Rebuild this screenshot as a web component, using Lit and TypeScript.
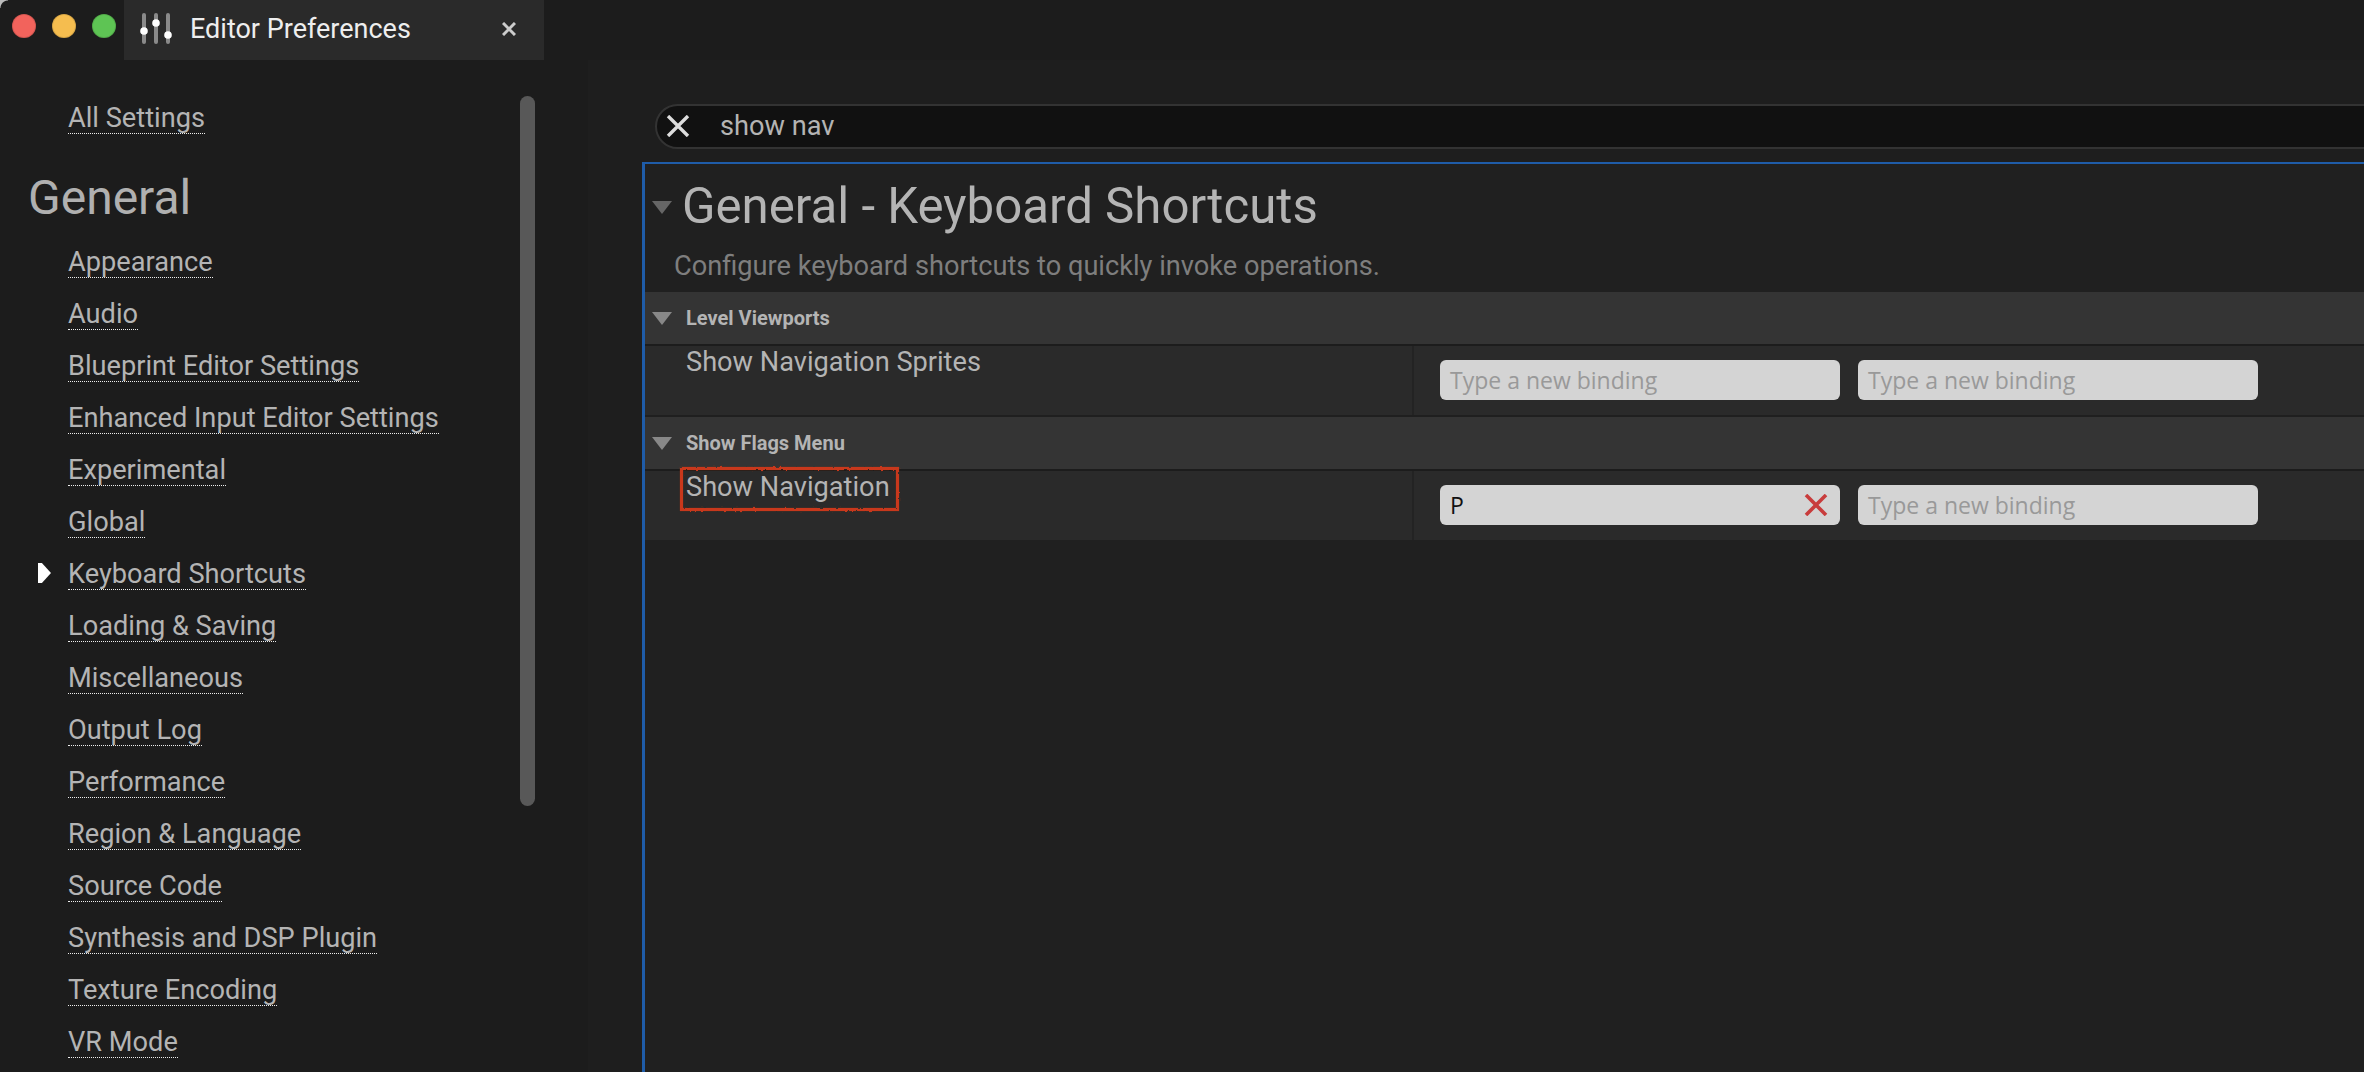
import { LitElement, html, css, svg } from 'lit';
import { customElement } from 'lit/decorators.js';

const LINKS = [
  'Appearance',
  'Audio',
  'Blueprint Editor Settings',
  'Enhanced Input Editor Settings',
  'Experimental',
  'Global',
  'Keyboard Shortcuts',
  'Loading & Saving',
  'Miscellaneous',
  'Output Log',
  'Performance',
  'Region & Language',
  'Source Code',
  'Synthesis and DSP Plugin',
  'Texture Encoding',
  'VR Mode',
];

const SLIDERS = svg`
  <rect x="2" y="0" width="4" height="31" rx="2" fill="#8a8a8a" />
  <rect x="14" y="0" width="4" height="31" rx="2" fill="#8a8a8a" />
  <rect x="26" y="0" width="4" height="31" rx="2" fill="#8a8a8a" />
  <circle cx="4" cy="18" r="3.8" fill="#fff" />
  <circle cx="16" cy="10" r="3.8" fill="#fff" />
  <circle cx="28" cy="22" r="3.8" fill="#fff" />
`;

@customElement('app-root')
export class AppRoot extends LitElement {
  static styles = css`
    :host {
      display: flex;
      flex-direction: column;
      width: 2364px;
      height: 1072px;
      overflow: hidden;
      background: #1c1c1c;
      font-family: Roboto, sans-serif;
      font-size: 27.2px;
      color: #b4b4b4;
    }

    .titlebar {
      display: flex;
      height: 60px;
      flex: none;
    }

    .lights {
      position: relative;
      display: flex;
      gap: 16px;
      width: 124px;
      padding: 14px 0 0 12px;
      box-sizing: border-box;
    }

    .corner {
      position: absolute;
      left: 0;
      top: 0;
      width: 8px;
      height: 8px;
      background: radial-gradient(circle at 8px 8px, transparent 7px, #bbb 8px);
    }

    .light {
      width: 24px;
      height: 24px;
      border-radius: 50%;
      box-shadow: inset 0 0 0 1px rgba(0, 0, 0, 0.12);
    }

    .tab {
      display: flex;
      align-items: center;
      width: 420px;
      padding: 0 28px 2px 16px;
      box-sizing: border-box;
      background: #2a2a2a;
      color: #eee;
      font-size: 27px;
    }

    .tab svg {
      flex: none;
    }

    .tab .sliders {
      margin-right: 18px;
    }

    .tab span {
      flex: 1;
    }

    .body {
      display: flex;
      flex: 1;
      min-height: 0;
    }

    .sidebar {
      position: relative;
      flex: none;
      width: 588px;
      padding: 41px 0 0 68px;
      box-sizing: border-box;
    }

    .scrollbar {
      position: absolute;
      left: 520px;
      top: 36px;
      width: 15px;
      height: 710px;
      border-radius: 8px;
      background: #585858;
    }

    .link {
      position: relative;
      width: fit-content;
      height: 32px;
      line-height: 34px;
      margin-bottom: 19px;
      border-bottom: 1px dotted #eee;
    }

    .link.active::before {
      content: '';
      position: absolute;
      left: -30px;
      top: 6px;
      width: 13px;
      height: 20px;
      background: #fff;
      clip-path: polygon(0 0, 30% 0, 100% 50%, 30% 100%, 0 100%);
    }

    h2 {
      margin: 36px 0 19px -40px;
      font-size: 48px;
      font-weight: 400;
      line-height: 56px;
      color: #b0b0b0;
    }

    .gutter {
      flex: none;
      width: 54px;
      background: #1e1e1e;
    }

    .main {
      flex: 1;
      min-width: 0;
      display: flex;
      flex-direction: column;
      padding-top: 44px;
      background: #1e1e1e;
    }

    .search {
      display: flex;
      align-items: center;
      height: 45px;
      margin: 0 -40px 13px 13px;
      padding: 0 0 2px 9px;
      box-sizing: border-box;
      background: #111;
      border: 2px solid #333;
      border-radius: 23px;
    }

    .search svg {
      flex: none;
      margin-right: 30px;
    }

    .panel {
      flex: 1;
      border-top: 2px solid #1f5ca8;
      border-left: 3px solid #1f5ca8;
      background: #202020;
    }

    .panel-title {
      display: flex;
      align-items: center;
      height: 62px;
      padding: 11px 0 0 7px;
    }

    .panel-title h1 {
      margin: 0 0 0 10px;
      font-size: 49.2px;
      font-weight: 400;
      line-height: 56px;
      color: #b4b4b4;
    }

    .tri {
      flex: none;
      width: 0;
      height: 0;
      border-left: 10px solid transparent;
      border-right: 10px solid transparent;
      border-top: 13px solid #888;
    }

    .panel-title .tri {
      border-top-color: #666;
      margin-top: 2px;
    }

    .desc {
      height: 55px;
      padding: 13px 0 0 29px;
      box-sizing: border-box;
      line-height: 32px;
      color: #7e7e7e;
    }

    .category {
      display: flex;
      align-items: center;
      gap: 14px;
      height: 52px;
      padding-left: 7px;
      background: #343434;
      border-bottom: 2px solid #1c1c1c;
      font-size: 20px;
      font-weight: 700;
      color: #b4b4b4;
    }

    .row {
      display: grid;
      grid-template-columns: 767px 1fr;
      height: 69px;
      background: #2a2a2a;
      border-bottom: 2px solid #1f1f1f;
    }

    .row:last-child {
      border-bottom: none;
    }

    .label {
      padding: 1px 0 0 41px;
      line-height: 30px;
    }

    .label span {
      position: relative;
      display: inline-block;
    }

    .mark {
      position: absolute;
      left: -6px;
      top: -5px;
      width: 219px;
      height: 44px;
      overflow: visible;
    }

    .bindings {
      display: flex;
      gap: 18px;
      padding: 14px 0 0 26px;
      border-left: 2px solid #232323;
    }

    .binding {
      display: flex;
      align-items: center;
      justify-content: space-between;
      width: 400px;
      height: 40px;
      padding: 0 12px 0 10px;
      box-sizing: border-box;
      border-radius: 6px;
      background: #d4d4d4;
      font-family: 'Open Sans', sans-serif;
      font-size: 23px;
      color: #111;
    }

    .binding.empty {
      color: #999;
    }
  `;

  private binding(value?: string) {
    return html`
      <div class="binding ${value ? '' : 'empty'}">
        ${value ?? 'Type a new binding'}
        ${value
          ? html`<svg width="24" height="22" viewBox="0 0 24 22"><path d="M2 1 22 21M22 1 2 21" stroke="#c83c3c" stroke-width="3.6" fill="none" /></svg>`
          : ''}
      </div>
    `;
  }

  render() {
    return html`
      <div class="titlebar">
        <div class="lights">
          <div class="corner"></div>
          <div class="light" style="background:#f2635c"></div>
          <div class="light" style="background:#f5bd4f"></div>
          <div class="light" style="background:#5ec454"></div>
        </div>
        <div class="tab">
          <svg class="sliders" width="32" height="32" viewBox="0 0 32 32">${SLIDERS}</svg>
          <span>Editor Preferences</span>
          <svg width="14" height="14" viewBox="0 0 14 14"><path d="M1 1 13 13M13 1 1 13" stroke="#ccc" stroke-width="3" /></svg>
        </div>
      </div>
      <div class="body">
        <nav class="sidebar">
          <div class="scrollbar"></div>
          <div class="link">All Settings</div>
          <h2>General</h2>
          ${LINKS.map(
            (l) => html`<div class="link ${l === 'Keyboard Shortcuts' ? 'active' : ''}">${l}</div>`
          )}
        </nav>
        <div class="gutter"></div>
        <main class="main">
          <div class="search">
            <svg width="24" height="22" viewBox="0 0 24 22"><path d="M2 1 22 21M22 1 2 21" stroke="#ddd" stroke-width="3.4" fill="none" /></svg>
            show nav
          </div>
          <section class="panel">
            <div class="panel-title"><i class="tri"></i><h1>General - Keyboard Shortcuts</h1></div>
            <div class="desc">Configure keyboard shortcuts to quickly invoke operations.</div>
            <div class="category"><i class="tri"></i>Level Viewports</div>
            <div class="row">
              <div class="label">Show Navigation Sprites</div>
              <div class="bindings">${this.binding()}${this.binding()}</div>
            </div>
            <div class="category"><i class="tri"></i>Show Flags Menu</div>
            <div class="row">
              <div class="label">
                <span>Show Navigation
                  <svg class="mark" viewBox="0 0 219 44">
                    <filter id="rough" x="-5%" y="-20%" width="110%" height="140%">
                      <feTurbulence type="fractalNoise" baseFrequency="0.25" numOctaves="2" seed="4" />
                      <feDisplacementMap in="SourceGraphic" scale="2.5" />
                    </filter>
                    <rect x="1.5" y="1.5" width="216" height="41" fill="none" stroke="#c8391b" stroke-width="3.2" filter="url(#rough)" />
                  </svg>
                </span>
              </div>
              <div class="bindings">${this.binding('P')}${this.binding()}</div>
            </div>
          </section>
        </main>
      </div>
    `;
  }
}
